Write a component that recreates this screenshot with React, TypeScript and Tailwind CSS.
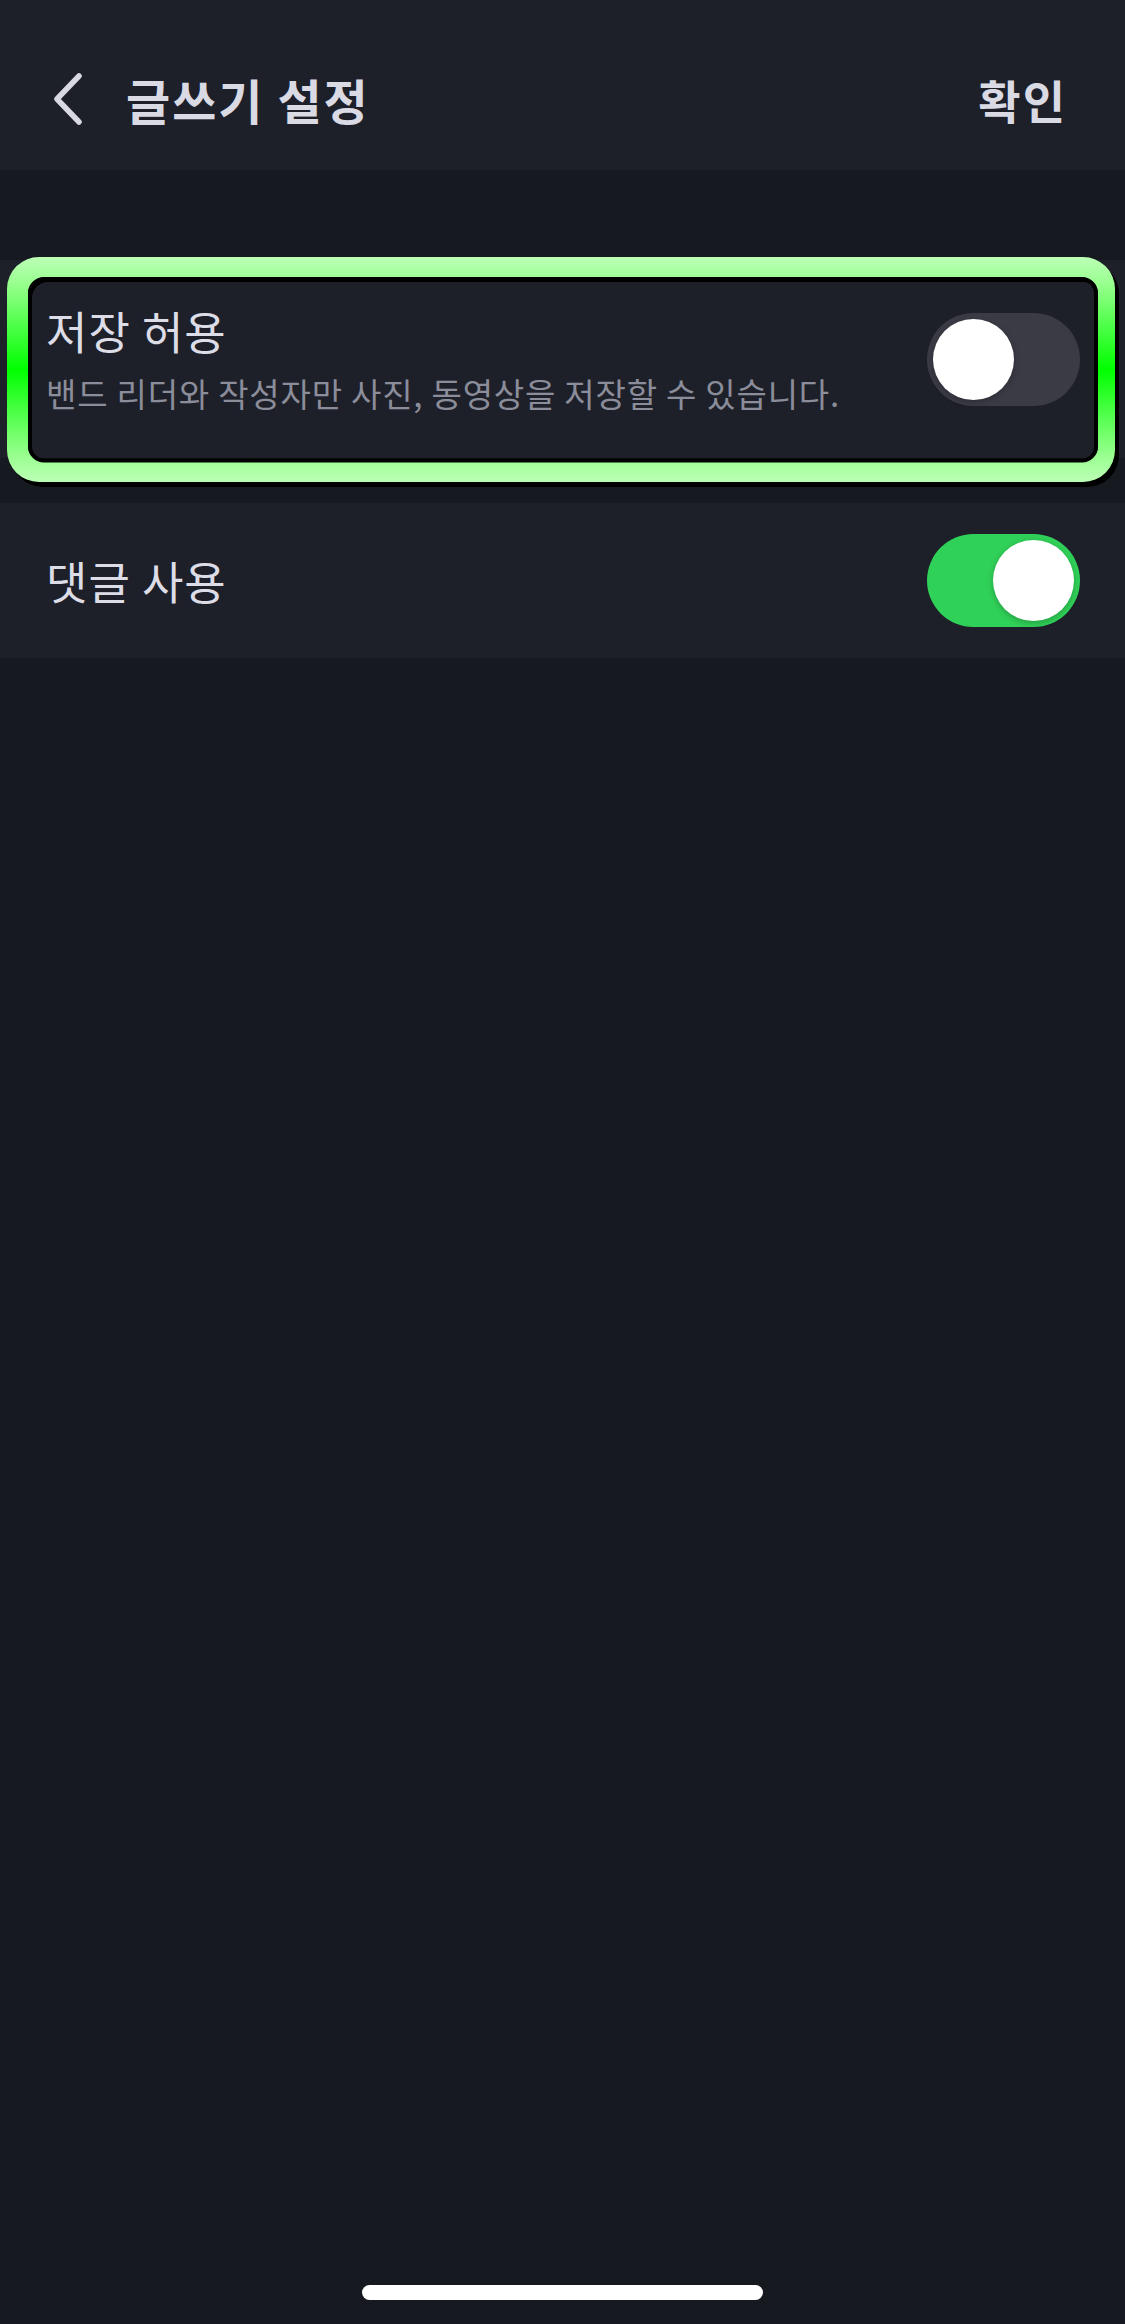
import React from "react";

const FONT = { fontFamily: '"Noto Sans CJK KR", "Noto Sans", sans-serif' };

function Toggle({ on }: { on: boolean }) {
  return (
    <div
      className={
        "relative w-[153px] h-[93px] rounded-full shrink-0 flex items-center px-[6px] " +
        (on ? "bg-[#30d158] justify-end" : "bg-[#3a3b45] justify-start")
      }
    >
      <div className="w-[81px] h-[81px] rounded-full bg-white shadow-[0_2px_6px_rgba(0,0,0,0.25)]" />
    </div>
  );
}

function Highlight() {
  const ring =
    "M39 7 H1083 A32 32 0 0 1 1115 39 V200 A32 32 0 0 1 1083 232 H39 A32 32 0 0 1 7 200 V39 A32 32 0 0 1 39 7 Z " +
    "M44 27 H1082 A16 16 0 0 1 1098 43 V196 A16 16 0 0 1 1082 212 H44 A16 16 0 0 1 28 196 V43 A16 16 0 0 1 44 27 Z";
  return (
    <svg
      className="absolute left-0 top-[250px] pointer-events-none"
      width={1125}
      height={245}
      viewBox="0 0 1125 245"
    >
      <defs>
        <linearGradient id="g" x1="0" y1="0" x2="0" y2="1">
          <stop offset="0" stopColor="#bcffb6" />
          <stop offset="0.12" stopColor="#98ff8e" />
          <stop offset="0.5" stopColor="#00ff00" />
          <stop offset="0.88" stopColor="#98ff8e" />
          <stop offset="1" stopColor="#bcffb6" />
        </linearGradient>
      </defs>
      <path d={ring} fill="#000" fillRule="evenodd" transform="translate(4 5)" />
      <path d={ring} fill="url(#g)" fillRule="evenodd" />
      <rect x={30} y={29.5} width={1066} height={181} rx={14} fill="none" stroke="#000" strokeWidth={4} />
    </svg>
  );
}

export default function App() {
  return (
    <div className="relative w-[1125px] h-[2324px] bg-[#161920] overflow-hidden" style={FONT}>
      {/* Header */}
      <div className="h-[170px] bg-[#1e2029] flex items-center pt-[28px] pl-[52px] pr-[58px]">
        <svg width="32" height="52" viewBox="0 0 32 52" className="shrink-0">
          <path d="M27 3 L5 26 L27 49" fill="none" stroke="#d8d9e3" strokeWidth="5.5" strokeLinecap="round" strokeLinejoin="round" />
        </svg>
        <div className="ml-[42px] text-[48px] font-bold text-[#d9dae4] leading-none tracking-[2px]">글쓰기 설정</div>
        <div className="ml-auto text-[46px] font-bold text-[#d9dae4] leading-none tracking-[2px]">확인</div>
      </div>

      {/* spacer */}
      <div className="h-[90px]" />

      {/* Row 1 */}
      <div className="h-[198px] bg-[#1e2029] flex items-center pl-[46px] pr-[45px]">
        <div className="flex-1 flex flex-col">
          <div className="text-[45px] text-[#dcdde6] leading-none tracking-[1px]">저장 허용</div>
          <div className="mt-[24px] text-[33px] text-[#8b8d9a] leading-none tracking-[0.8px]">
            밴드 리더와 작성자만 사진, 동영상을 저장할 수 있습니다.
          </div>
        </div>
        <Toggle on={false} />
      </div>

      {/* gap */}
      <div className="h-[45px]" />

      {/* Row 2 */}
      <div className="h-[155px] bg-[#1e2029] flex items-center pl-[46px] pr-[45px]">
        <div className="flex-1 text-[45px] text-[#dcdde6] leading-none tracking-[1px]">댓글 사용</div>
        <Toggle on={true} />
      </div>

      <Highlight />

      {/* Home indicator */}
      <div className="absolute left-[362px] top-[2285px] w-[401px] h-[15px] rounded-full bg-white" />
    </div>
  );
}
